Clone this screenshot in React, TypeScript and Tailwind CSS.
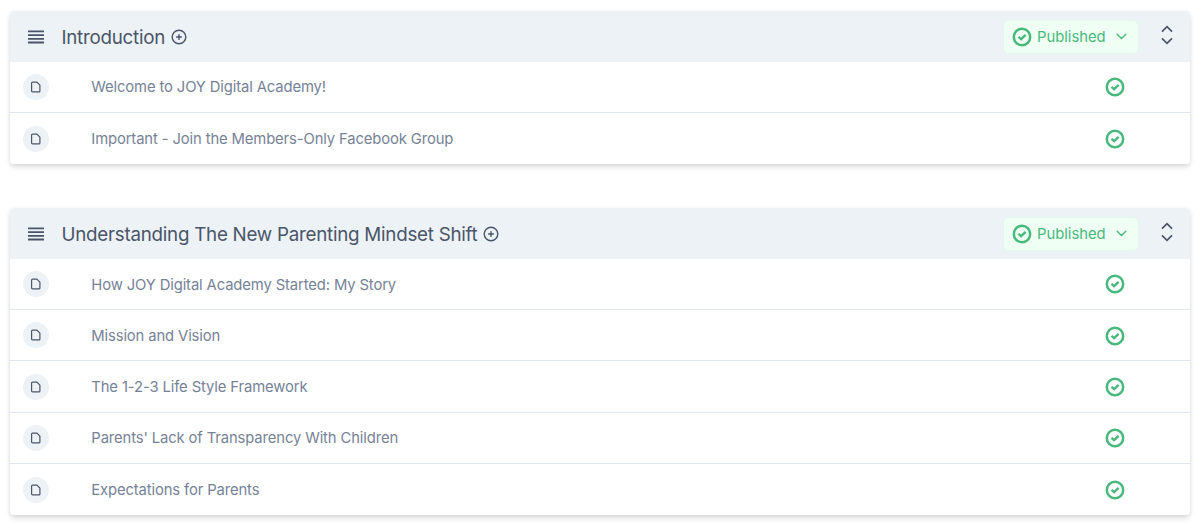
import React from 'react';

interface Section {
  title: string;
  lessons: string[];
}

const sections: Section[] = [
  {
    title: 'Introduction',
    lessons: [
      'Welcome to JOY Digital Academy!',
      'Important - Join the Members-Only Facebook Group',
    ],
  },
  {
    title: 'Understanding The New Parenting Mindset Shift',
    lessons: [
      'How JOY Digital Academy Started: My Story',
      'Mission and Vision',
      'The 1-2-3 Life Style Framework',
      "Parents' Lack of Transparency With Children",
      'Expectations for Parents',
    ],
  },
];

function DragHandle() {
  return (
    <svg className="h-[14px] w-4 shrink-0 text-[#4a5568]" viewBox="0 0 16 14" fill="none" stroke="currentColor" strokeWidth="1.8">
      <path d="M0 1.4h16M0 5.1h16M0 8.8h16M0 12.5h16" />
    </svg>
  );
}

function AddIcon() {
  return (
    <svg className="h-4 w-4 shrink-0 text-[#4a5568]" viewBox="0 0 16 16" fill="none" stroke="currentColor" strokeWidth="1.4" strokeLinecap="round">
      <circle cx="8" cy="8" r="6.8" />
      <path d="M8 5.6v4.8M5.6 8h4.8" />
    </svg>
  );
}

function CheckBadge() {
  return (
    <svg className="h-5 w-5 shrink-0 text-[#48b97c]" viewBox="0 0 20 20" fill="none" stroke="currentColor" strokeWidth="2.5">
      <circle cx="10" cy="10" r="8.2" />
      <path d="M6.5 9.9l2.6 2.3 4.5-4.3" strokeWidth="2.3" />
    </svg>
  );
}

function PageIcon() {
  return (
    <svg className="h-3 w-[10px] text-[#4a5568]" viewBox="0 0 10 12" fill="none" stroke="currentColor" strokeWidth="1.2" strokeLinejoin="round">
      <path d="M1.6 1.1h4.3l3 3.1v5.7a1 1 0 0 1-1 1H1.6a1 1 0 0 1-1-1V2.1a1 1 0 0 1 1-1z" />
    </svg>
  );
}

function SectionHeader({ title }: { title: string }) {
  return (
    <div className="flex h-[51px] items-center rounded-t bg-[#edf2f7] pl-[18px] pr-[17.5px] pt-px">
      <DragHandle />
      <h2 className="ml-[17.5px] mr-[5.5px] pt-[2px] text-[18.8px] leading-6 tracking-[-0.26px] text-[#4a5568]">{title}</h2>
      <AddIcon />
      <button className="ml-auto flex h-[34px] w-[136px] items-center rounded-md border border-[#e2f8ec] bg-[#f0fff4] pl-[8.5px] text-[14.8px] text-[#48b97c]">
        <CheckBadge />
        <span className="ml-[5px] pt-px">Published</span>
        <svg className="ml-auto mr-[11px] h-[7px] w-[11px]" viewBox="0 0 11 7" fill="none" stroke="currentColor" strokeWidth="1.4" strokeLinecap="round">
          <path d="M1.2 1.2l4.3 4.3 4.3-4.3" />
        </svg>
      </button>
      <svg className="mb-[4px] ml-[22px] h-5 w-3 text-[#4a5568]" viewBox="0 0 12 20" fill="none" stroke="currentColor" strokeWidth="1.7">
        <path d="M1 6.6l5-4.9 5 4.9M1 13.4l5 4.9 5-4.9" />
      </svg>
    </div>
  );
}

function LessonRow({ name }: { name: string }) {
  return (
    <li className="flex h-[51.3px] items-center border-b border-[#e2e8f0] pl-[13px] pr-[65px] last:border-b-0">
      <span className="flex h-[26px] w-[26px] items-center justify-center rounded-full bg-[#edf2f7]">
        <PageIcon />
      </span>
      <span className="ml-[42.3px] pt-[1.4px] text-[14.8px] tracking-[-0.12px] text-[#768297]">{name}</span>
      <span className="ml-auto pt-px">
        <CheckBadge />
      </span>
    </li>
  );
}

export default function App() {
  return (
    <main className="flex h-[527px] flex-col gap-[43.5px] overflow-hidden bg-white px-[10px] pt-[10.7px] font-['Inter',sans-serif]">
      {sections.map((section) => (
        <section key={section.title} className="shrink-0 rounded bg-white shadow-[0_4px_6px_-1px_rgba(0,0,0,0.12),0_1px_4px_rgba(0,0,0,0.08)]">
          <SectionHeader title={section.title} />
          <ul>
            {section.lessons.map((lesson) => (
              <LessonRow key={lesson} name={lesson} />
            ))}
          </ul>
        </section>
      ))}
    </main>
  );
}
